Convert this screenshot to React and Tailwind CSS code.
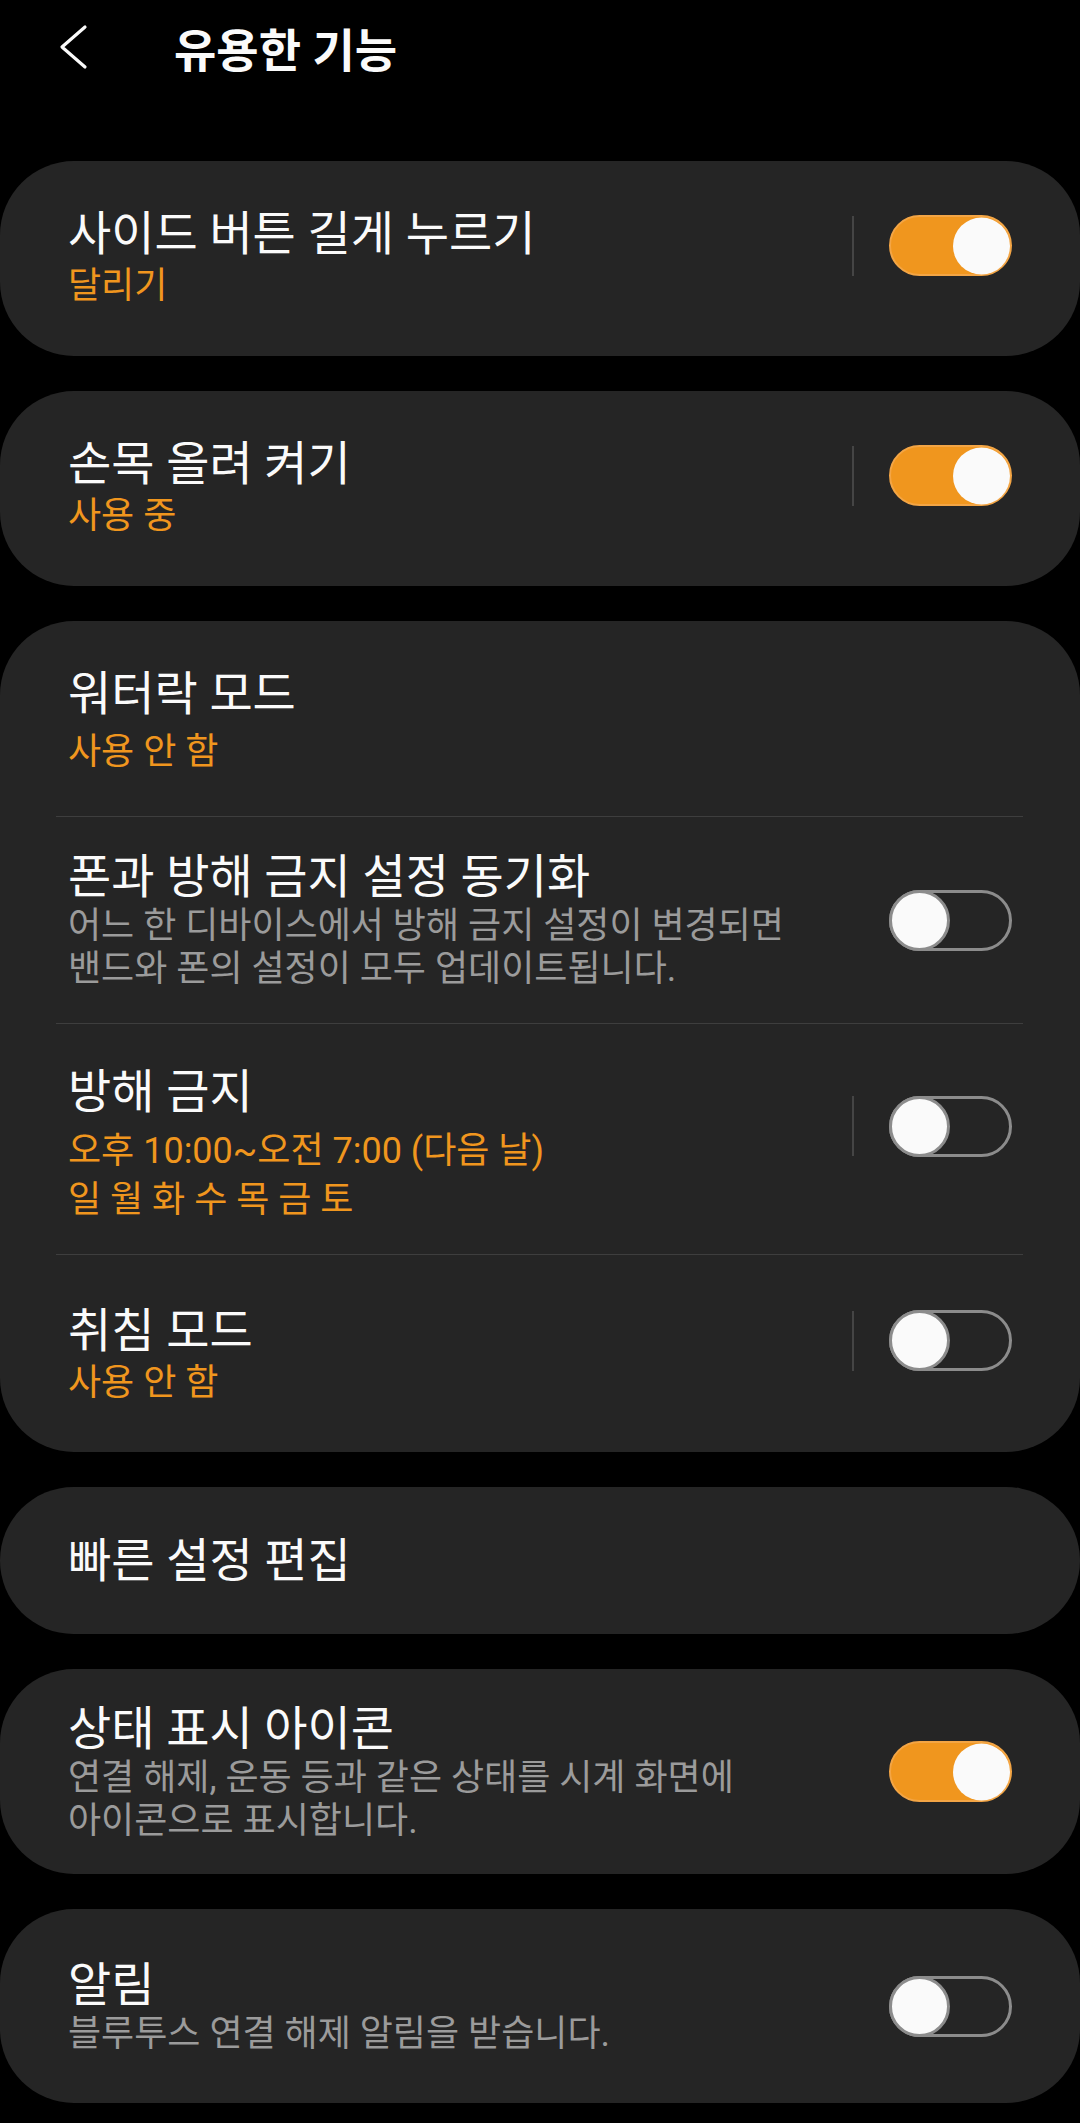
import React from 'react';

const cards = [
  [{ title: '사이드 버튼 길게 누르기', sub: ['달리기'], toggle: 'on', divider: true, h: 'h-[195px]' }],
  [{ title: '손목 올려 켜기', sub: ['사용 중'], toggle: 'on', divider: true, h: 'h-[195px]' }],
  [
    { title: '워터락 모드', sub: ['사용 안 함'], h: 'h-[195px]', pad: 'pt-[6px]', subMt: 'mt-[6px]' },
    {
      title: '폰과 방해 금지 설정 동기화',
      desc: ['어느 한 디바이스에서 방해 금지 설정이 변경되면', '밴드와 폰의 설정이 모두 업데이트됩니다.'],
      toggle: 'off',
      h: 'h-[206px]',
    },
    {
      title: '방해 금지',
      sub: ['오후 10:00~오전 7:00 (다음 날)', '일 월 화 수 목 금 토'],
      toggle: 'off',
      divider: true,
      h: 'h-[230px]',
      pad: 'pt-[10px]',
      subMt: 'mt-[7px]',
    },
    { title: '취침 모드', sub: ['사용 안 함'], toggle: 'off', divider: true, h: 'h-[197px]', pad: 'pt-[4px]' },
  ],
  [{ title: '빠른 설정 편집', h: 'h-[147px]' }],
  [
    {
      title: '상태 표시 아이콘',
      desc: ['연결 해제, 운동 등과 같은 상태를 시계 화면에', '아이콘으로 표시합니다.'],
      toggle: 'on',
      h: 'h-[205px]',
    },
  ],
  [{ title: '알림', desc: ['블루투스 연결 해제 알림을 받습니다.'], toggle: 'off', h: 'h-[194px]' }],
];

const Switch = ({ on }) => {
  if (on) {
    return (
      <div className="relative w-[123px] h-[61px] rounded-full bg-[#f0961e] border-2 border-[#f3a545]">
        <div className="absolute right-0 top-1/2 -translate-y-1/2 size-[57px] rounded-full bg-[#fafafa]" />
      </div>
    );
  }
  return (
    <div className="relative w-[123px] h-[61px]">
      <div className="absolute inset-0 rounded-full border-[3px] border-[#8c8c8c]" />
      <div className="absolute left-0 top-0 size-[61px] rounded-full bg-[#fafafa] border-[3px] border-[#8c8c8c]" />
    </div>
  );
};

const Row = ({ item }) => (
  <div className={`flex items-center pl-[68px] pr-[68px] ${item.h}`}>
    <div className={`flex-1 min-w-0 flex flex-col ${item.pad || ''}`}>
      <div className="text-[47px] leading-[56px] text-[#fafafa] whitespace-nowrap">{item.title}</div>
      {item.sub && (
        <div className={item.subMt || ''}>
          {item.sub.map((line, i) => (
            <div key={i} className="text-[36px] leading-[49px] text-[#f0961e] whitespace-nowrap">
              {line}
            </div>
          ))}
        </div>
      )}
      {item.desc && (
        <div>
          {item.desc.map((line, i) => (
            <div key={i} className="text-[36px] leading-[43px] text-[#9b9b9b] whitespace-nowrap">
              {line}
            </div>
          ))}
        </div>
      )}
    </div>
    {item.toggle && (
      <div className={`flex items-center ${item.divider ? 'mb-[26px]' : ''}`}>
        {item.divider && <div className="w-[2px] h-[60px] bg-[#454545] mr-[35px]" />}
        <Switch on={item.toggle === 'on'} />
      </div>
    )}
  </div>
);

export default function App() {
  return (
    <div className="w-[1080px] min-h-[2123px] bg-black font-['Roboto','Noto_Sans_CJK_KR',sans-serif] overflow-hidden">
      {/* header */}
      <div className="h-[102px] flex items-center pl-[58px]">
        <svg width="32" height="46" viewBox="0 0 32 46" className="mb-[8px]" fill="none">
          <polyline points="27,3 4,23 27,43" stroke="#fafafa" strokeWidth="3.2" strokeLinecap="round" strokeLinejoin="round" />
        </svg>
        <h1 className="ml-[84px] text-[46px] font-bold text-[#fafafa] leading-none">유용한 기능</h1>
      </div>

      <div className="pt-[59px] flex flex-col gap-[35px]">
        {cards.map((rows, ci) => (
          <div key={ci} className="bg-[#252525] rounded-[74px] overflow-hidden">
            {rows.map((item, ri) => (
              <React.Fragment key={ri}>
                {ri > 0 && <div className="h-px bg-[#3e3e3e] ml-[56px] mr-[57px]" />}
                <Row item={item} />
              </React.Fragment>
            ))}
          </div>
        ))}
      </div>
    </div>
  );
}
